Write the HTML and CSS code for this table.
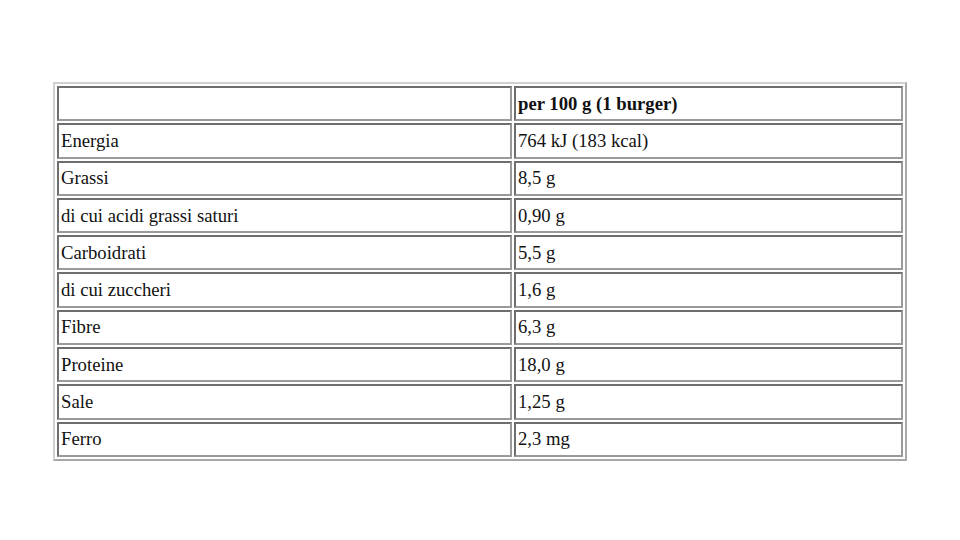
FILE: index.html
```html
<!DOCTYPE html>
<html>
<head>
<meta charset="utf-8">
<link rel="stylesheet" href="styles.css">
</head>
<body>
<table class="nutri">
  <tr><td class="c1"></td><td class="c2 head">per 100 g (1 burger)</td></tr>
  <tr><td class="c1">Energia</td><td class="c2">764 kJ (183 kcal)</td></tr>
  <tr><td class="c1">Grassi</td><td class="c2">8,5 g</td></tr>
  <tr><td class="c1">di cui acidi grassi saturi</td><td class="c2">0,90 g</td></tr>
  <tr><td class="c1">Carboidrati</td><td class="c2">5,5 g</td></tr>
  <tr><td class="c1">di cui zuccheri</td><td class="c2">1,6 g</td></tr>
  <tr><td class="c1">Fibre</td><td class="c2">6,3 g</td></tr>
  <tr><td class="c1">Proteine</td><td class="c2">18,0 g</td></tr>
  <tr><td class="c1">Sale</td><td class="c2">1,25 g</td></tr>
  <tr><td class="c1">Ferro</td><td class="c2">2,3 mg</td></tr>
</table>
</body>
</html>
```
FILE: styles.css
```css
html, body {
  margin: 0;
  padding: 0;
  background: #ffffff;
}
body {
  padding: 82px 0 0 53px;
  font-family: "Liberation Serif", "Times New Roman", serif;
  font-size: 18.7px;
  color: #111111;
}
.nutri {
  border-collapse: separate;
  border-spacing: 2px;
  border: 2px solid;
  border-color: #d0d0d0 #a8a8a8 #a8a8a8 #d0d0d0;
  width: 854px;
  table-layout: fixed;
}
.nutri td {
  box-sizing: border-box;
  height: 35.3px;
  padding: 0 0 0 2px;
  border: 2px solid;
  border-color: #6e6e6e #9a9a9a #9a9a9a #6e6e6e;
  vertical-align: middle;
  line-height: 20px;
  white-space: nowrap;
}
.c1 { width: 455px; }
.c2 { width: 389px; }
.head { font-weight: bold; }
```
